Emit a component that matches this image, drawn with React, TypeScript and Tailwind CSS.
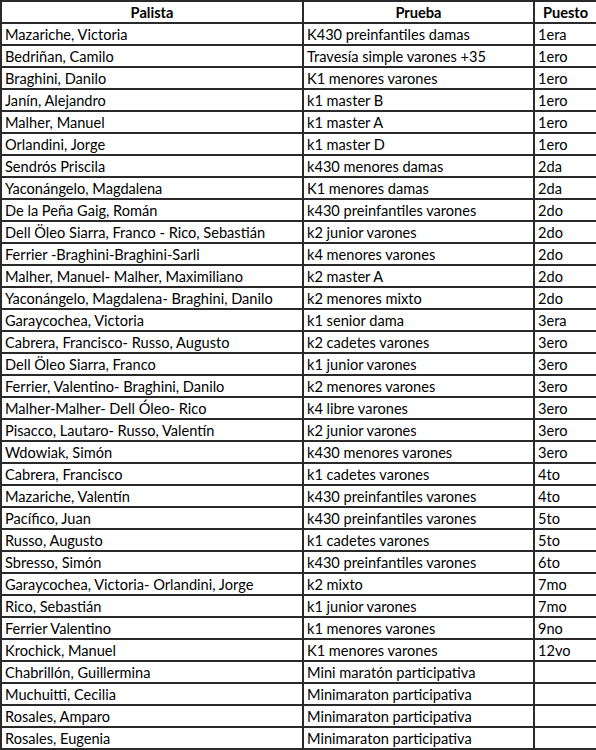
const rows: [string, string, string][] = [
  ['Mazariche, Victoria', 'K430 preinfantiles damas', '1era'],
  ['Bedriñan, Camilo', 'Travesía simple varones +35', '1ero'],
  ['Braghini, Danilo', 'K1 menores varones', '1ero'],
  ['Janín, Alejandro', 'k1 master B', '1ero'],
  ['Malher, Manuel', 'k1 master A', '1ero'],
  ['Orlandini, Jorge', 'k1 master D', '1ero'],
  ['Sendrós Priscila', 'k430 menores damas', '2da'],
  ['Yaconángelo, Magdalena', 'K1 menores damas', '2da'],
  ['De la Peña Gaig, Román', 'k430 preinfantiles varones', '2do'],
  ['Dell Öleo Siarra, Franco - Rico, Sebastián', 'k2 junior varones', '2do'],
  ['Ferrier -Braghini-Braghini-Sarli', 'k4 menores varones', '2do'],
  ['Malher, Manuel- Malher, Maximiliano', 'k2 master A', '2do'],
  ['Yaconángelo, Magdalena- Braghini, Danilo', 'k2 menores mixto', '2do'],
  ['Garaycochea, Victoria', 'k1 senior dama', '3era'],
  ['Cabrera, Francisco- Russo, Augusto', 'k2 cadetes varones', '3ero'],
  ['Dell Öleo Siarra, Franco', 'k1 junior varones', '3ero'],
  ['Ferrier, Valentino- Braghini, Danilo', 'k2 menores varones', '3ero'],
  ['Malher-Malher- Dell Óleo- Rico', 'k4 libre varones', '3ero'],
  ['Pisacco, Lautaro- Russo, Valentín', 'k2 junior varones', '3ero'],
  ['Wdowiak, Simón', 'k430 menores varones', '3ero'],
  ['Cabrera, Francisco', 'k1 cadetes varones', '4to'],
  ['Mazariche, Valentín', 'k430 preinfantiles varones', '4to'],
  ['Pacífico, Juan', 'k430 preinfantiles varones', '5to'],
  ['Russo, Augusto', 'k1 cadetes varones', '5to'],
  ['Sbresso, Simón', 'k430 preinfantiles varones', '6to'],
  ['Garaycochea, Victoria- Orlandini, Jorge', 'k2 mixto', '7mo'],
  ['Rico, Sebastián', 'k1 junior varones', '7mo'],
  ['Ferrier Valentino', 'k1 menores varones', '9no'],
  ['Krochick, Manuel', 'K1 menores varones', '12vo'],
  ['Chabrillón, Guillermina', 'Mini maratón participativa', ''],
  ['Muchuitti, Cecilia', 'Minimaraton participativa', ''],
  ['Rosales, Amparo', 'Minimaraton participativa', ''],
  ['Rosales, Eugenia', 'Minimaraton participativa', ''],
];

export default function App() {
  const cell = 'border-2 border-[#2a2a2a] h-[22px] px-[3px] pt-[2px] leading-none whitespace-nowrap overflow-hidden';
  return (
    <div className="bg-white w-[596px] h-[750px] overflow-hidden font-['Lato',sans-serif] text-[14.6px] text-black">
      <table className="table-fixed border-collapse w-[596px]">
        <colgroup>
          <col className="w-[302px]" />
          <col className="w-[231px]" />
          <col className="w-[63px]" />
        </colgroup>
        <thead>
          <tr>
            <th className={`${cell} font-bold text-center`}>Palista</th>
            <th className={`${cell} font-bold text-center`}>Prueba</th>
            <th className={`${cell} font-bold text-center`}>Puesto</th>
          </tr>
        </thead>
        <tbody>
          {rows.map((r, i) => (
            <tr key={i}>
              <td className={cell}>{r[0]}</td>
              <td className={cell}>{r[1]}</td>
              <td className={cell}>{r[2]}</td>
            </tr>
          ))}
        </tbody>
      </table>
    </div>
  );
}
